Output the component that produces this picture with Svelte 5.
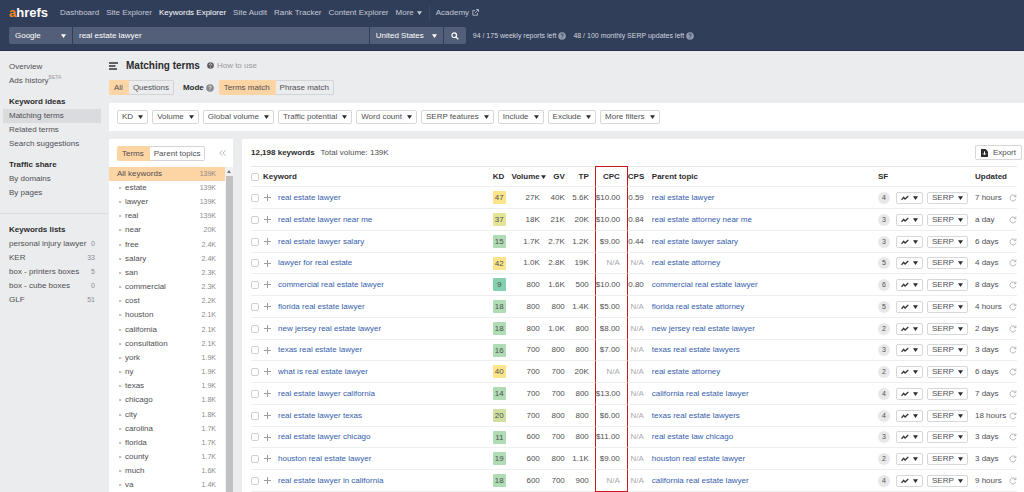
<script>
    const nav = ["Dashboard", "Site Explorer", "Keywords Explorer", "Site Audit", "Rank Tracker", "Content Explorer"]
    const filters = ["KD", "Volume", "Global volume", "Traffic potential", "Word count", "SERP features", "Include", "Exclude", "More filters"]

    const lists = [
        ["personal injury lawyer", 0],
        ["KER", 33],
        ["box - printers boxes", 5],
        ["box - cube boxes", 0],
        ["GLF", 51],
    ]

    const terms = [
        ["estate", "139K"], ["lawyer", "139K"], ["real", "139K"], ["near", "20K"], ["free", "2.4K"],
        ["salary", "2.4K"], ["san", "2.3K"], ["commercial", "2.3K"], ["cost", "2.2K"], ["houston", "2.1K"],
        ["california", "2.1K"], ["consultation", "2.1K"], ["york", "1.9K"], ["ny", "1.9K"], ["texas", "1.9K"],
        ["chicago", "1.8K"], ["city", "1.8K"], ["carolina", "1.7K"], ["florida", "1.7K"], ["county", "1.7K"],
        ["much", "1.6K"], ["va", "1.4K"],
    ]

    // keyword, kd, volume, gv, tp, cpc, cps, parent topic, sf, updated
    const rows = [
        ["real estate lawyer", 47, "27K", "40K", "5.6K", "$10.00", "0.59", "real estate lawyer", 4, "7 hours"],
        ["real estate lawyer near me", 37, "18K", "21K", "20K", "$10.00", "0.84", "real estate attorney near me", 3, "a day"],
        ["real estate lawyer salary", 15, "1.7K", "2.7K", "1.2K", "$9.00", "0.44", "real estate lawyer salary", 3, "6 days"],
        ["lawyer for real estate", 42, "1.0K", "2.8K", "19K", "N/A", "N/A", "real estate attorney", 5, "4 days"],
        ["commercial real estate lawyer", 9, "800", "1.6K", "500", "$10.00", "0.80", "commercial real estate lawyer", 6, "8 days"],
        ["florida real estate lawyer", 18, "800", "800", "1.4K", "$5.00", "N/A", "florida real estate attorney", 5, "4 hours"],
        ["new jersey real estate lawyer", 18, "800", "1.0K", "800", "$8.00", "N/A", "new jersey real estate lawyer", 2, "2 days"],
        ["texas real estate lawyer", 16, "700", "800", "800", "$7.00", "N/A", "texas real estate lawyers", 3, "3 days"],
        ["what is real estate lawyer", 40, "700", "700", "20K", "N/A", "N/A", "real estate attorney", 2, "6 days"],
        ["real estate lawyer california", 14, "700", "700", "800", "$13.00", "N/A", "california real estate lawyer", 4, "7 days"],
        ["real estate lawyer texas", 20, "700", "800", "800", "$6.00", "N/A", "texas real estate lawyers", 4, "18 hours"],
        ["real estate lawyer chicago", 11, "600", "700", "800", "$11.00", "N/A", "real estate law chicago", 3, "3 days"],
        ["houston real estate lawyer", 19, "600", "800", "1.1K", "$9.00", "N/A", "houston real estate lawyer", 2, "3 days"],
        ["real estate lawyer in california", 18, "600", "700", "900", "N/A", "N/A", "california real estate lawyer", 4, "9 hours"],
    ]

    let query = $state("real estate lawyer")

    function kdColor(kd) {
        if (kd < 10) return "#83cfae"
        if (kd < 20) return "#afdcb4"
        if (kd < 30) return "#cfdf9f"
        if (kd < 40) return "#e3e494"
        return "#fce48a"
    }
</script>

{#snippet caret()}
    <svg class="caret" viewBox="0 0 5 4" aria-hidden="true"><path d="M0 0.3h5L2.5 3.9z" /></svg>
{/snippet}

{#snippet help()}
    <svg class="help" viewBox="0 0 8 8" aria-hidden="true">
        <circle cx="4" cy="4" r="3.8" />
        <path d="M2.8 3.2c0-1.7 2.4-1.6 2.4-.1 0 .9-1.2.9-1.2 1.8M4 5.6v.8" />
    </svg>
{/snippet}

<div class="page">
    <header>
        <nav class="top">
            <a class="logo" href="#home"><span>a</span>hrefs</a>
            {#each nav as item}
                <a href="#nav" class:active={item === "Keywords Explorer"}>{item}</a>
            {/each}
            <a href="#more">More {@render caret()}</a>
            <a class="academy" href="#academy">Academy
                <svg class="ext" viewBox="0 0 7 7" aria-hidden="true"><path d="M3 1.5H.8v4.7h4.7V4M4 .5h2.5V3M6.3.7L3 4" /></svg>
            </a>
        </nav>
        <div class="search">
            <div class="field engine">
                <select aria-label="Search engine"><option>Google</option></select>
                {@render caret()}
            </div>
            <input class="query" aria-label="Keywords" bind:value={query} />
            <div class="field country">
                <select aria-label="Country"><option>United States</option></select>
                {@render caret()}
            </div>
            <button class="go" aria-label="Search">
                <svg viewBox="0 0 8 8" aria-hidden="true"><circle cx="3.2" cy="3.2" r="2.3" /><path d="M5 5l2.4 2.4" /></svg>
            </button>
            <span class="quota">94 / 175 weekly reports left {@render help()}</span>
            <span class="quota">48 / 100 monthly SERP updates left {@render help()}</span>
        </div>
    </header>

    <div class="body">
        <aside>
            <nav class="side">
                <a href="#overview">Overview</a>
                <a href="#ads">Ads history<sup>BETA</sup></a>
                <h2>Keyword ideas</h2>
                <a class="selected" href="#matching">Matching terms</a>
                <a href="#related">Related terms</a>
                <a href="#suggestions">Search suggestions</a>
                <h2>Traffic share</h2>
                <a href="#domains">By domains</a>
                <a href="#pages">By pages</a>
            </nav>
            <nav class="side lists">
                <h2>Keywords lists</h2>
                {#each lists as [name, count]}
                    <a href="#list">{name}<span class="count">{count}</span></a>
                {/each}
            </nav>
        </aside>

        <main>
            <div class="title">
                <svg class="burger" viewBox="0 0 9 8" aria-hidden="true"><path d="M0 1h9M0 4h6.5M0 7h8" /></svg>
                <h1>Matching terms</h1>
                <a class="howto" href="#how">{@render help()} How to use</a>
            </div>

            <div class="modes">
                <div class="toggle">
                    <button class="on">All</button><button>Questions</button>
                </div>
                <b>Mode</b>
                {@render help()}
                <div class="toggle">
                    <button class="on">Terms match</button><button>Phrase match</button>
                </div>
            </div>

            <div class="filters">
                {#each filters as filter}
                    <button>{filter} {@render caret()}</button>
                {/each}
            </div>

            <div class="cards">
                <section class="terms">
                    <div class="head">
                        <div class="toggle">
                            <button class="on">Terms</button><button>Parent topics</button>
                        </div>
                        <button class="collapse" aria-label="Collapse">
                            <svg viewBox="0 0 7 6" aria-hidden="true"><path d="M3.2.4L.8 3l2.4 2.6M6.4.4L4 3l2.4 2.6" /></svg>
                        </button>
                    </div>
                    <div class="scroller">
                        <ul>
                            <li class="all">All keywords<span class="count">139K</span></li>
                            {#each terms as [term, volume]}
                                <li>
                                    <svg class="arrow" viewBox="0 0 4 4" aria-hidden="true"><path d="M.4.2L3.8 2 .4 3.8z" /></svg>
                                    {term}<span class="count">{volume}</span>
                                </li>
                            {/each}
                        </ul>
                        <div class="bar">
                            <svg viewBox="0 0 4 3" aria-hidden="true"><path d="M0 3h4L2 0z" /></svg>
                            <div class="thumb"></div>
                        </div>
                    </div>
                </section>

                <section class="results">
                    <div class="head">
                        <b>12,198 keywords</b>
                        <span>Total volume: 139K</span>
                        <button class="export">
                            <svg viewBox="0 0 7 8" aria-hidden="true"><path d="M0 0h4.6L7 2.4V8H0z" /><path class="down" d="M3.5 2.4v3M2 4.4l1.5 1.5L5 4.4" /></svg>
                            Export
                        </button>
                    </div>
                    <table>
                        <colgroup>
                            <col class="w-check" /><col class="w-keyword" /><col class="w-kd" /><col class="w-vol" />
                            <col class="w-gv" /><col class="w-tp" /><col class="w-cpc" /><col class="w-cps" /><col />
                            <col class="w-sf" /><col class="w-trend" /><col class="w-serp" /><col class="w-upd" /><col class="w-ref" />
                        </colgroup>
                        <thead>
                            <tr>
                                <th><input type="checkbox" aria-label="Select all" /></th>
                                <th>Keyword</th>
                                <th>KD</th>
                                <th class="num">Volume{@render caret()}</th>
                                <th class="num">GV</th>
                                <th class="num tp">TP</th>
                                <th class="num cpc">CPC</th>
                                <th class="num">CPS</th>
                                <th class="parent">Parent topic</th>
                                <th>SF</th>
                                <th></th>
                                <th></th>
                                <th>Updated</th>
                                <th></th>
                            </tr>
                        </thead>
                        <tbody>
                            {#each rows as [keyword, kd, volume, gv, tp, cpc, cps, parent, sf, updated]}
                                <tr>
                                    <td><input type="checkbox" aria-label={keyword} /></td>
                                    <td>
                                        <div class="keyword">
                                            <button class="plus" aria-label="Add to list">
                                                <svg viewBox="0 0 7 7" aria-hidden="true"><path d="M3.5 0v7M0 3.5h7" /></svg>
                                            </button>
                                            <a href="#keyword">{keyword}</a>
                                        </div>
                                    </td>
                                    <td><span class="kd" style="background:{kdColor(kd)}">{kd}</span></td>
                                    <td class="num vol">{volume}</td>
                                    <td class="num">{gv}</td>
                                    <td class="num tp">{tp}</td>
                                    <td class="num cpc"><span class:na={cpc === "N/A"}>{cpc}</span></td>
                                    <td class="num"><span class:na={cps === "N/A"}>{cps}</span></td>
                                    <td class="parent"><a href="#parent">{parent}</a></td>
                                    <td><span class="sf">{sf}</span></td>
                                    <td>
                                        <button class="trend" aria-label="Trend">
                                            <svg viewBox="0 0 9 6" aria-hidden="true"><path d="M.6 5.2L3 2.2l1.6 2L8.2.8" /></svg>
                                            {@render caret()}
                                        </button>
                                    </td>
                                    <td><button class="serp">SERP {@render caret()}</button></td>
                                    <td>{updated}</td>
                                    <td>
                                        <button class="refresh" aria-label="Refresh">
                                            <svg viewBox="0 0 8 8" aria-hidden="true"><path d="M6.9 4.6A3 3 0 1 1 6.4 2.2M6.9.6v2H4.9" /></svg>
                                        </button>
                                    </td>
                                </tr>
                            {/each}
                        </tbody>
                    </table>
                </section>
            </div>
        </main>
    </div>
</div>

<style>
    :global(body) {
        margin: 0;
        background: #ebecee;
    }

    .page {
        height: 100vh;
        display: flex;
        flex-direction: column;
        overflow: hidden;
        font: 8px/14px "Liberation Sans", Arial, sans-serif;
        color: #4f4f52;
    }
    .page * {
        box-sizing: border-box;
    }
    a {
        color: inherit;
        text-decoration: none;
    }
    button, input, select {
        font: inherit;
        color: inherit;
    }
    button {
        padding: 0;
        border: 0;
        background: none;
        white-space: nowrap;
    }
    h1, h2, ul {
        margin: 0;
        padding: 0;
    }
    b, h1, h2, th {
        color: #2c2c2e;
    }
    .caret {
        width: 5px;
        height: 4px;
        fill: currentColor;
    }
    .help {
        width: 8px;
        height: 8px;
        fill: #85888d;
    }
    .help path {
        fill: none;
        stroke: #ebecee;
        stroke-width: 0.9;
    }

    /* top bar */
    header {
        flex: none;
        height: 51px;
        background: #303e59;
        border-bottom: 1px solid #27304a;
        color: #c3c9d6;
    }
    .top {
        height: 24px;
        padding: 1px 9px 0;
        display: flex;
        align-items: center;
        gap: 7px;
        white-space: nowrap;
    }
    .top a {
        display: flex;
        align-items: center;
        gap: 3px;
    }
    .top a.active {
        color: #fff;
    }
    .top a.logo {
        gap: 0;
        margin-right: 5px;
        font-size: 13px;
        font-weight: bold;
        color: #fff;
    }
    .logo span {
        color: #f58a1f;
    }
    .top a.academy {
        padding-left: 6px;
        border-left: 1px solid #3d4b66;
    }
    .ext {
        width: 7px;
        height: 7px;
        fill: none;
        stroke: currentColor;
        stroke-width: 0.8;
    }
    .search {
        height: 17px;
        margin: 3px 9px 0;
        display: flex;
        align-items: stretch;
        gap: 1px;
        color: #fff;
    }
    .search .field, .search .query, .search .go {
        background: #535f78;
    }
    .field {
        display: flex;
        align-items: center;
        padding: 0 6px;
    }
    .field select {
        flex: 1;
        min-width: 0;
        padding: 0;
        border: 0;
        background: none;
        appearance: none;
    }
    .engine {
        width: 63px;
        border-radius: 2px 0 0 2px;
    }
    .query {
        width: calc(29% + 4px);
        padding: 0 6px;
        border: 0;
    }
    .country {
        width: 73px;
    }
    .go {
        width: 22px;
        border-radius: 0 2px 2px 0;
        display: flex;
        align-items: center;
        justify-content: center;
    }
    .go svg {
        width: 8px;
        height: 8px;
        fill: none;
        stroke: #fff;
        stroke-width: 1.2;
    }
    .quota {
        display: flex;
        align-items: center;
        gap: 2px;
        margin-left: 6px;
        font-size: 7px;
        color: #d0d5df;
        white-space: nowrap;
    }
    .quota .help {
        fill: #909aac;
    }
    .quota .help path {
        stroke: #303e59;
    }

    /* left navigation */
    .body {
        flex: 1;
        min-height: 0;
        display: flex;
    }
    aside {
        flex: none;
        width: 109px;
    }
    .side {
        padding: 9px 8px 13px 3px;
        display: flex;
        flex-direction: column;
    }
    .side a, .side h2 {
        height: 14px;
        padding: 0 6px;
        display: flex;
        align-items: center;
        font-size: 8px;
        white-space: nowrap;
    }
    .side h2 {
        height: 15px;
        margin-top: 6px;
    }
    .side sup {
        font-size: 5px;
        line-height: 6px;
        align-self: flex-start;
        color: #98999c;
    }
    .side .selected {
        background: #d9dbde;
    }
    .lists {
        padding-top: 2px;
        border-top: 1px solid #dcdddf;
    }
    .count {
        margin-left: auto;
        font-size: 7px;
        color: #8a8b8e;
    }

    main {
        flex: 1;
        min-width: 0;
        display: flex;
        flex-direction: column;
    }
    .title {
        height: 29px;
        display: flex;
        align-items: center;
    }
    .burger {
        width: 9px;
        height: 8px;
        margin-right: 8px;
        stroke: #333;
        stroke-width: 1.3;
    }
    h1 {
        font-size: 10px;
    }
    .howto {
        margin-left: 7px;
        display: flex;
        align-items: center;
        gap: 3px;
        color: #98999c;
    }
    .howto .help {
        width: 7px;
        height: 7px;
        fill: #5c5d60;
    }
    .modes {
        height: 15px;
        display: flex;
        align-items: center;
    }
    .modes b {
        margin: 0 2px 0 9px;
    }
    .modes .help {
        margin-right: 5px;
    }
    .toggle {
        display: flex;
    }
    .toggle button {
        height: 15px;
        padding: 0 4px;
        line-height: 13px;
        border: 1px solid #d3d4d6;
        border-left: 0;
    }
    .toggle button:last-child {
        border-radius: 0 2px 2px 0;
    }
    .toggle .on {
        padding: 0 5px;
        border-color: #fdd4a4;
        border-radius: 2px 0 0 2px;
        background: #fdd4a4;
    }
    .filters {
        height: 28px;
        margin-top: 8px;
        padding: 0 8px;
        display: flex;
        align-items: center;
        gap: 4px;
        background: #fff;
    }
    .filters button, .export, .trend, .serp {
        height: 14px;
        padding: 0 4px;
        display: flex;
        align-items: center;
        gap: 5px;
        line-height: 12px;
        border: 1px solid #d6d7d9;
        border-radius: 2px;
        background: #fff;
    }
    .filters .caret, .trend .caret, .serp .caret {
        fill: #2c2c2e;
    }
    .cards {
        flex: 1;
        min-height: 0;
        margin-top: 8px;
        display: flex;
        gap: 9px;
    }
    section {
        background: #fff;
    }
    .head {
        height: 27px;
        display: flex;
        align-items: center;
    }

    /* terms column */
    .terms {
        flex: none;
        width: 124px;
        display: flex;
        flex-direction: column;
    }
    .terms .head {
        flex: none;
        height: 28px;
        padding: 0 7px 0 8px;
        justify-content: space-between;
    }
    .collapse svg {
        display: block;
        width: 7px;
        height: 6px;
        fill: none;
        stroke: #a5a6a9;
        stroke-width: 0.8;
    }
    .scroller {
        flex: 1;
        min-height: 0;
        display: flex;
        overflow: hidden;
    }
    ul {
        flex: 1;
        list-style: none;
    }
    li {
        height: 14px;
        padding: 0 9px 0 10px;
        display: flex;
        align-items: center;
    }
    li:nth-child(6n) {
        height: 15px;
    }
    li.all {
        padding-left: 8px;
        background: #fdd4a4;
    }
    .arrow {
        width: 3px;
        height: 4px;
        margin-right: 3px;
        fill: #a5a6a9;
    }
    .bar {
        width: 8px;
        display: flex;
        flex-direction: column;
        align-items: center;
        background: #f1f1f1;
    }
    .bar svg {
        width: 4px;
        height: 3px;
        margin: 3px 0;
        fill: #777;
    }
    .thumb {
        flex: 1;
        width: 7px;
        background: #c1c1c1;
    }

    /* results */
    .results {
        flex: 1;
        min-width: 0;
        padding: 0 7px 0 9px;
        overflow: hidden;
    }
    .results .head {
        gap: 6px;
    }
    .results .head .export {
        height: 15px;
        padding: 0 5px;
        margin-left: auto;
        margin-right: -5px;
    }
    .export svg {
        width: 7px;
        height: 8px;
        fill: #2c2c2e;
    }
    .export .down {
        fill: none;
        stroke: #fff;
    }
    table {
        width: 100%;
        table-layout: fixed;
        border-collapse: separate;
        border-spacing: 0;
    }
    .w-check { width: 12px; }
    .w-keyword { width: 30%; }
    .w-kd { width: 16px; }
    .w-vol { width: 37px; }
    .w-gv { width: 19px; }
    .w-tp { width: 30px; }
    .w-cpc { width: 33px; }
    .w-cps { width: 16px; }
    .w-sf { width: 18px; }
    .w-trend { width: 31px; }
    .w-serp { width: 48px; }
    .w-upd { width: 34px; }
    .w-ref { width: 8px; }
    th, td {
        padding: 0;
        text-align: left;
        vertical-align: middle;
        white-space: nowrap;
        line-height: 14px;
        border-bottom: 1px solid #eeeeef;
    }
    th {
        height: 21px;
        border-top: 1px solid #e6e6e8;
    }
    td {
        height: 22px;
    }
    tr:nth-child(4n) td {
        height: 21px;
    }
    .num {
        text-align: right;
    }
    .num.vol {
        padding-right: 6px;
    }
    .num .caret {
        margin-left: 1px;
        vertical-align: baseline;
    }
    .num.tp {
        padding-right: 6px;
    }
    .num.cpc {
        padding-right: 7px;
        border-left: 1px solid #c9181e;
        border-right: 1px solid #c9181e;
    }
    th.cpc {
        border-top-color: #c9181e;
    }
    tbody tr:last-child td.cpc {
        border-bottom-color: #c9181e;
    }
    .na {
        color: #a9aaad;
    }
    td a {
        color: #3560ac;
    }
    .parent {
        padding-left: 8px;
    }
    input[type="checkbox"] {
        display: block;
        width: 8px;
        height: 8px;
        margin: 0;
        appearance: none;
        border: 1px solid #cfd0d2;
        border-radius: 2px;
        background: #fff;
    }
    .keyword {
        display: flex;
        align-items: center;
        gap: 7px;
        padding-left: 1px;
    }
    .plus svg {
        display: block;
        width: 7px;
        height: 7px;
        stroke: #9c9da0;
        stroke-width: 1;
    }
    .kd {
        display: block;
        width: 13px;
        height: 13px;
        line-height: 13px;
        text-align: center;
        border-radius: 1px;
    }
    .sf {
        display: block;
        width: 12px;
        height: 12px;
        line-height: 12px;
        font-size: 7px;
        text-align: center;
        border-radius: 6px;
        background: #e8e8e9;
    }
    .trend, .serp {
        height: 12px;
        gap: 4px;
        line-height: 10px;
    }
    .trend svg:first-child {
        width: 8px;
        height: 6px;
        fill: none;
        stroke: #333;
        stroke-width: 1.4;
    }
    .refresh {
        display: block;
    }
    .refresh svg {
        display: block;
        width: 8px;
        height: 8px;
        fill: none;
        stroke: #a5a6a9;
        stroke-width: 0.8;
    }
</style>
